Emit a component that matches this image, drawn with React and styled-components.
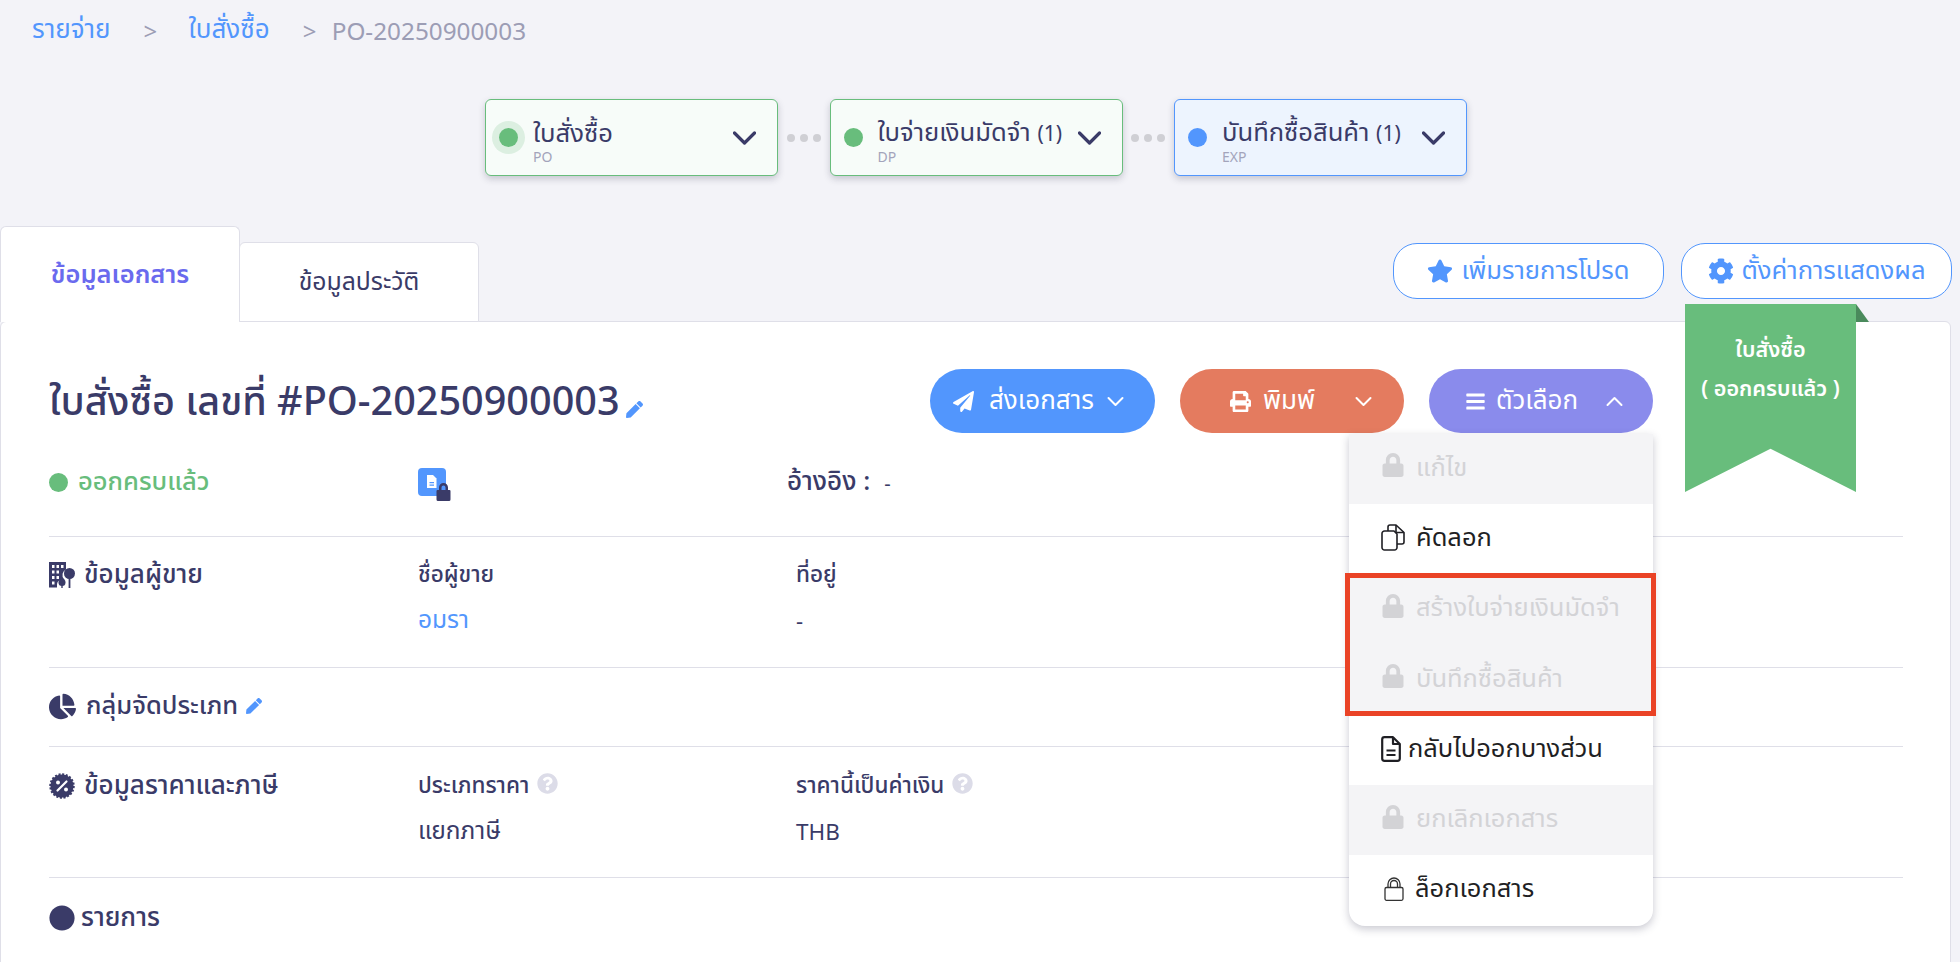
import styled, { createGlobalStyle } from 'styled-components'
import { FaStar, FaCog, FaPaperPlane, FaPrint, FaBars, FaPen, FaLock, FaChartPie, FaQuestionCircle, FaCircle } from 'react-icons/fa'

const ink = '#3a3b68'
const blue = '#5296fd'
const green = '#68bd7c'
const line = '#dfdfe8'

const GlobalStyle = createGlobalStyle`
    html, body { margin: 0; padding: 0; background: #f3f3f8; }
    body { font-family: "Noto Sans", "Noto Sans Thai", "Open Sans", sans-serif; color: ${ink}; }
    * { box-sizing: border-box; }
`

const Page = styled.div`
    height: 962px;
    overflow: hidden;
    display: flex;
    flex-direction: column;
`

const Breadcrumb = styled.nav`
    height: 60px;
    padding-left: 32px;
    display: flex;
    align-items: center;
    font-size: 24.3px;
    color: #9c9db5;
`
const Crumb = styled.span`
    color: ${blue};
    font-size: 26px;
`
const Sep = styled.span`
    width: 14px;
    margin: 0 ${p => p.$after}px 0 ${p => p.$before}px;
    font-size: 24px;
`

const Steps = styled.div`
    margin-top: 39px;
    padding-left: 485px;
    display: flex;
    align-items: center;
`
const Step = styled.div`
    width: 293px;
    height: 77px;
    flex-shrink: 0;
    display: flex;
    align-items: center;
    padding: 0 21px 0 13px;
    border: 1px solid ${p => p.$color};
    border-radius: 6px;
    background: ${p => p.$bg};
    box-shadow: 0 3px 7px rgba(40, 40, 70, 0.22);
`
const StepDot = styled.span`
    width: 19px;
    height: 19px;
    border-radius: 50%;
    flex-shrink: 0;
    background: ${p => p.$color};
    box-shadow: ${p => p.$halo ? '0 0 0 7px #dcefe1' : 'none'};
`
const StepText = styled.div`
    flex: 1;
    min-width: 0;
    margin-left: 15px;
`
const StepTitle = styled.div`
    font-size: 25.6px;
    line-height: 32px;
    margin-top: 6px;
    white-space: nowrap;
`
const StepCount = styled.span`font-size: 21px;`
const StepCode = styled.div`
    font-size: 14px;
    line-height: 16px;
    color: #a3a4bb;
`
const Dots = styled.div`
    width: 51.5px;
    flex-shrink: 0;
    display: flex;
    justify-content: center;
    gap: 5px;
`
const Dot = styled.i`
    width: 8px;
    height: 8px;
    border-radius: 50%;
    background: #cfcfd4;
`

const TabRow = styled.div`
    margin-top: 50px;
    height: 96px;
    display: flex;
    align-items: flex-end;
    position: relative;
    z-index: 1;
    margin-bottom: -1px;
`
const Tab = styled.div`
    width: 240px;
    height: ${p => p.$active ? 96 : 80}px;
    display: flex;
    align-items: center;
    justify-content: center;
    margin-left: ${p => p.$active ? 0 : -1}px;
    background: #fff;
    border: 1px solid ${line};
    border-bottom: ${p => p.$active ? 'none' : `1px solid ${line}`};
    border-radius: 6px 6px 0 0;
    font-size: ${p => p.$active ? 25.5 : 24.8}px;
    font-weight: ${p => p.$active ? 600 : 400};
    color: ${p => p.$active ? '#6a6aee' : ink};
`
const TopActions = styled.div`
    margin-left: auto;
    align-self: flex-start;
    margin-top: 17px;
    padding-right: 8px;
    display: flex;
    gap: 17px;
`
const OutlineButton = styled.button`
    width: 271px;
    height: 56px;
    display: flex;
    align-items: center;
    justify-content: center;
    gap: 8px;
    background: #fff;
    border: 1px solid ${blue};
    border-radius: 24px;
    color: ${blue};
    font: inherit;
    font-size: 25.6px;
    svg { font-size: 26px; }
`

const Panel = styled.section`
    flex: 1;
    position: relative;
    margin: 0 9px -10px 0;
    padding: 0 47px 0 48px;
    background: #fff;
    border: 1px solid ${line};
    border-radius: 6px;
`
const Ribbon = styled.div`
    position: absolute;
    top: -18px;
    left: 1684px;
    width: 171px;
    height: 188px;
    padding-top: 25px;
    background: ${green};
    clip-path: polygon(0 0, 100% 0, 100% 100%, 50% 77%, 0 100%);
    color: #fff;
    text-align: center;
    font-size: 21.6px;
    font-weight: 600;
    line-height: 39px;
`
const RibbonFold = styled.div`
    position: absolute;
    top: -18px;
    left: 1855px;
    width: 13px;
    height: 18px;
    background: #4a8a5c;
    clip-path: polygon(0 0, 100% 100%, 0 100%);
`

const Head = styled.div`
    height: 112px;
    padding-top: 47px;
    display: flex;
    align-items: flex-start;
    justify-content: space-between;
`
const Title = styled.h1`
    margin: 0;
    height: 68px;
    display: flex;
    align-items: center;
    gap: 6px;
    font-size: 39.6px;
    font-weight: 500;
    svg { font-size: 17px; color: ${blue}; margin-top: 12px; }
`
const HeadActions = styled.div`
    display: flex;
    gap: 25px;
    padding-right: 250px;
`
const MenuWrap = styled.div`position: relative;`
const ActionButton = styled.button`
    width: ${p => p.$w || 224}px;
    height: 64px;
    display: flex;
    align-items: center;
    padding: 0 0 0 ${p => p.$pad}px;
    border: none;
    border-radius: 32px;
    background: ${p => p.$bg};
    color: #fff;
    font: inherit;
    font-size: 26px;
    svg:first-child { font-size: 21px; margin-right: ${p => p.$iconGap}px; }
    svg:last-child { margin-left: ${p => p.$chevGap}px; }
`
const Menu = styled.div`
    position: absolute;
    top: 64.5px;
    right: 0;
    width: 304px;
    background: #fff;
    border-radius: 0 0 16px 16px;
    box-shadow: 0 3px 9px rgba(40, 40, 70, 0.25);
    z-index: 3;
`
const MenuItem = styled.div`
    height: 70.3px;
    padding: 0 0 2px 32px;
    display: flex;
    align-items: center;
    gap: ${p => p.$gap ?? 11}px;
    background: ${p => p.$disabled ? '#f4f4f6' : 'transparent'};
    color: ${p => p.$disabled ? '#d3d3d6' : '#1f1f24'};
    font-size: 25.5px;
    white-space: nowrap;
    svg { flex-shrink: 0; }
`
const MenuLock = styled(FaLock)`
    font-size: 24px;
    margin-top: -5px;
    color: #d3d3d6;
`
const Highlight = styled.div`
    position: absolute;
    top: 139.5px;
    left: -4px;
    width: 311px;
    height: 143px;
    border: 5px solid #ea4326;
    pointer-events: none;
`

const Row = styled.div`
    height: ${p => p.$h}px;
    padding-top: ${p => p.$pt}px;
    display: grid;
    grid-template-columns: 369px 378px 1fr;
    border-bottom: ${p => p.$last ? 'none' : `1px solid ${line}`};
`
const Status = styled.div`
    height: 28px;
    display: flex;
    align-items: center;
    gap: 10px;
    color: ${green};
    font-size: 25.5px;
    font-weight: 500;
`
const StatusDot = styled.i`
    width: 19px;
    height: 19px;
    border-radius: 50%;
    background: ${green};
`
const Reference = styled.div`
    height: 28px;
    margin-left: -9px;
    display: flex;
    align-items: center;
    gap: 14px;
    font-size: 26px;
    font-weight: 500;
    span { font-weight: 400; font-size: 20px; margin-top: 2px; }
`
const SectionLabel = styled.div`
    height: 28px;
    display: flex;
    align-items: center;
    gap: ${p => p.$gap ?? 9}px;
    font-size: ${p => p.$size || 26}px;
    font-weight: 500;
`
const Field = styled.div``
const FieldLabel = styled.div`
    height: 28px;
    display: flex;
    align-items: center;
    gap: 8px;
    font-size: 22.5px;
    font-weight: 500;
`
const FieldValue = styled.div`
    height: 28px;
    margin-top: 17px;
    display: flex;
    align-items: center;
    font-size: ${p => p.$size || 24.5}px;
    color: ${p => p.$link ? blue : ink};
`
const EditIcon = styled(FaPen)`
    font-size: 16px;
    margin-left: -2px;
    color: ${blue};
`
const HelpIcon = styled(FaQuestionCircle)`
    font-size: 21px;
    margin-top: -5px;
    color: #dcdce8;
`

function Chevron({ up, big }) {
    const w = big ? 23 : 17
    const h = big ? 14 : 11
    const s = big ? 3.2 : 2
    const pts = up ? `1.500,${h - 2} ${w / 2},2 ${w - 1.500},${h - 2}` : `1.500,2 ${w / 2},${h - 2} ${w - 1.500},2`
    return (
        <svg width={w} height={h} viewBox={`0 0 ${w} ${h}`} fill="none" stroke="currentColor" strokeWidth={s} strokeLinecap="round" strokeLinejoin="round">
            <polyline points={pts} />
        </svg>
    )
}

function BuildingIcon() {
    return (
        <svg width="26" height="26" viewBox="0 0 26 26" fill={ink}>
            <path fillRule="evenodd" d="M0 0h17v7.500a6 6 0 0 0-2 9.500c.6.700 1 1.200 1.200 2a5 5 0 0 0-8.200 4v2.500H0zM3 3v3h2.500V3zm4.500 0v3H10V3zm4.500 0v3h2.500V3zM3 8.500v3h2.500v-3zm4.500 0v3H10v-3zM3 14v3h2.500v-3zm4.500 0v3H10v-3zM3 19.500v3h2.500v-3z" />
            <circle cx="20.500" cy="11.500" r="5.500" />
            <rect x="19.600" y="15" width="1.800" height="11" />
            <circle cx="13" cy="20.500" r="3.500" />
            <rect x="12.300" y="22" width="1.400" height="4" />
        </svg>
    )
}

function PercentBadge() {
    return (
        <svg width="26" height="26" viewBox="0 0 26 26">
            <circle cx="13" cy="13" r="11.500" fill={ink} stroke={ink} strokeWidth="2.500" strokeDasharray="2 1.600" />
            <path d="M17.500 8.500l-9 9" stroke="#fff" strokeWidth="2.200" strokeLinecap="round" />
            <circle cx="9" cy="9.500" r="2" fill="#fff" />
            <circle cx="17" cy="16.500" r="2" fill="#fff" />
        </svg>
    )
}

function DocLockIcon() {
    return (
        <svg width="34" height="33" viewBox="0 0 34 33">
            <rect width="28" height="28" rx="4" fill={blue} />
            <path d="M9 7h6l3.500 3.500V20H9z" fill="#fff" />
            <path d="M11.500 14h4.500v1.300h-4.500zm0 2.500h4.500v1.300h-4.500z" fill={blue} />
            <path d="M21 22v-2.500a4.500 4.500 0 0 1 9 0V22h1.500a1 1 0 0 1 1 1v8.500a1.500 1.500 0 0 1-1.500 1.500H20a1.500 1.500 0 0 1-1.500-1.500V23a1 1 0 0 1 1-1zm2.500 0h4v-2.500a2 2 0 0 0-4 0z" fill={ink} />
        </svg>
    )
}

function CopyIcon() {
    return (
        <svg width="24" height="27" viewBox="0 0 24 27" fill="none" stroke="#1f1f24" strokeWidth="1.600" strokeLinejoin="round">
            <path d="M3.500 7H13l3 3v13.500a2.500 2.500 0 0 1-2.500 2.500h-10A2.500 2.500 0 0 1 1 23.500v-14A2.500 2.500 0 0 1 3.500 7z" />
            <path d="M7 7V3a2 2 0 0 1 2-2h6l8 7.500V18a2 2 0 0 1-2 2h-5" />
            <path d="M15 1v7.500h8" />
        </svg>
    )
}

function FileIcon() {
    return (
        <svg width="20" height="26" viewBox="0 0 20 26" fill="none" stroke="#1f1f24" strokeWidth="2.200" strokeLinejoin="round">
            <path d="M3.500 1.200H12l6.800 6.800v14.500a2.300 2.300 0 0 1-2.300 2.300h-13a2.300 2.300 0 0 1-2.300-2.300v-19a2.300 2.300 0 0 1 2.300-2.300z" />
            <path d="M12 1.200V8h6.800" />
            <path d="M5.500 14.500h9M5.500 19h9" strokeWidth="1.800" />
        </svg>
    )
}

const ClosedLockSvg = styled.svg`margin-left: 3px;`

function ClosedLockIcon() {
    return (
        <ClosedLockSvg width="20" height="24" viewBox="0 0 20 24" fill="none" stroke="#333" strokeWidth="1.300">
            <rect x="1" y="10.500" width="18" height="12.800" rx="1.500" />
            <path d="M4 10.500V7a6 6 0 0 1 12 0v3.500" />
            <path d="M6.500 10.500V7a3.500 3.500 0 0 1 7 0v3.500" />
        </ClosedLockSvg>
    )
}

function App() {
    return (
        <Page>
            <GlobalStyle />
            <Breadcrumb>
                <Crumb>รายจ่าย</Crumb>
                <Sep $before={33} $after={31}>&gt;</Sep>
                <Crumb>ใบสั่งซื้อ</Crumb>
                <Sep $before={33} $after={15}>&gt;</Sep>
                <span>PO-20250900003</span>
            </Breadcrumb>

            <Steps>
                <Step $color={green} $bg="#f7fcf9">
                    <StepDot $color={green} $halo />
                    <StepText>
                        <StepTitle>ใบสั่งซื้อ</StepTitle>
                        <StepCode>PO</StepCode>
                    </StepText>
                    <Chevron big />
                </Step>
                <Dots><Dot /><Dot /><Dot /></Dots>
                <Step $color={green} $bg="#f7fcf9">
                    <StepDot $color={green} />
                    <StepText>
                        <StepTitle>ใบจ่ายเงินมัดจำ <StepCount>(1)</StepCount></StepTitle>
                        <StepCode>DP</StepCode>
                    </StepText>
                    <Chevron big />
                </Step>
                <Dots><Dot /><Dot /><Dot /></Dots>
                <Step $color={blue} $bg="#edf4fe">
                    <StepDot $color={blue} />
                    <StepText>
                        <StepTitle>บันทึกซื้อสินค้า <StepCount>(1)</StepCount></StepTitle>
                        <StepCode>EXP</StepCode>
                    </StepText>
                    <Chevron big />
                </Step>
            </Steps>

            <TabRow>
                <Tab $active>ข้อมูลเอกสาร</Tab>
                <Tab>ข้อมูลประวัติ</Tab>
                <TopActions>
                    <OutlineButton><FaStar />เพิ่มรายการโปรด</OutlineButton>
                    <OutlineButton><FaCog />ตั้งค่าการแสดงผล</OutlineButton>
                </TopActions>
            </TabRow>

            <Panel>
                <RibbonFold />
                <Ribbon>ใบสั่งซื้อ<br />( ออกครบแล้ว )</Ribbon>

                <Head>
                    <Title>ใบสั่งซื้อ เลขที่ #PO-20250900003 <FaPen /></Title>
                    <HeadActions>
                        <ActionButton $w={225} $bg={blue} $pad={23} $iconGap={15} $chevGap={13}><FaPaperPlane />ส่งเอกสาร<Chevron /></ActionButton>
                        <ActionButton $bg="#e47b5f" $pad={50} $iconGap={12} $chevGap={40}><FaPrint />พิมพ์<Chevron /></ActionButton>
                        <MenuWrap>
                            <ActionButton $bg="#8a8bec" $pad={36} $iconGap={10} $chevGap={28}><FaBars />ตัวเลือก<Chevron up /></ActionButton>
                            <Menu>
                                <MenuItem $disabled><MenuLock />แก้ไข</MenuItem>
                                <MenuItem><CopyIcon />คัดลอก</MenuItem>
                                <MenuItem $disabled><MenuLock />สร้างใบจ่ายเงินมัดจำ</MenuItem>
                                <MenuItem $disabled><MenuLock />บันทึกซื้อสินค้า</MenuItem>
                                <MenuItem $gap={7}><FileIcon />กลับไปออกบางส่วน</MenuItem>
                                <MenuItem $disabled><MenuLock />ยกเลิกเอกสาร</MenuItem>
                                <MenuItem $gap={11}><ClosedLockIcon />ล็อกเอกสาร</MenuItem>
                                <Highlight />
                            </Menu>
                        </MenuWrap>
                    </HeadActions>
                </Head>

                <Row $h={103} $pt={34}>
                    <Status><StatusDot />ออกครบแล้ว</Status>
                    <div><DocLockIcon /></div>
                    <Reference>อ้างอิง : <span>-</span></Reference>
                </Row>

                <Row $h={131} $pt={24}>
                    <SectionLabel><BuildingIcon />ข้อมูลผู้ขาย</SectionLabel>
                    <Field>
                        <FieldLabel>ชื่อผู้ขาย</FieldLabel>
                        <FieldValue $link>อมรา</FieldValue>
                    </Field>
                    <Field>
                        <FieldLabel>ที่อยู่</FieldLabel>
                        <FieldValue $size={22}>-</FieldValue>
                    </Field>
                </Row>

                <Row $h={79} $pt={24}>
                    <SectionLabel $size={25.5} $gap={10}><FaChartPie size={27} />กลุ่มจัดประเภท <EditIcon /></SectionLabel>
                </Row>

                <Row $h={131} $pt={25}>
                    <SectionLabel><PercentBadge />ข้อมูลราคาและภาษี</SectionLabel>
                    <Field>
                        <FieldLabel>ประเภทราคา <HelpIcon /></FieldLabel>
                        <FieldValue>แยกภาษี</FieldValue>
                    </Field>
                    <Field>
                        <FieldLabel>ราคานี้เป็นค่าเงิน <HelpIcon /></FieldLabel>
                        <FieldValue $size={22.5}>THB</FieldValue>
                    </Field>
                </Row>

                <Row $h={80} $pt={26} $last>
                    <SectionLabel $gap={6}><FaCircle size={26} />รายการ</SectionLabel>
                </Row>
            </Panel>
        </Page>
    )
}

export default App
